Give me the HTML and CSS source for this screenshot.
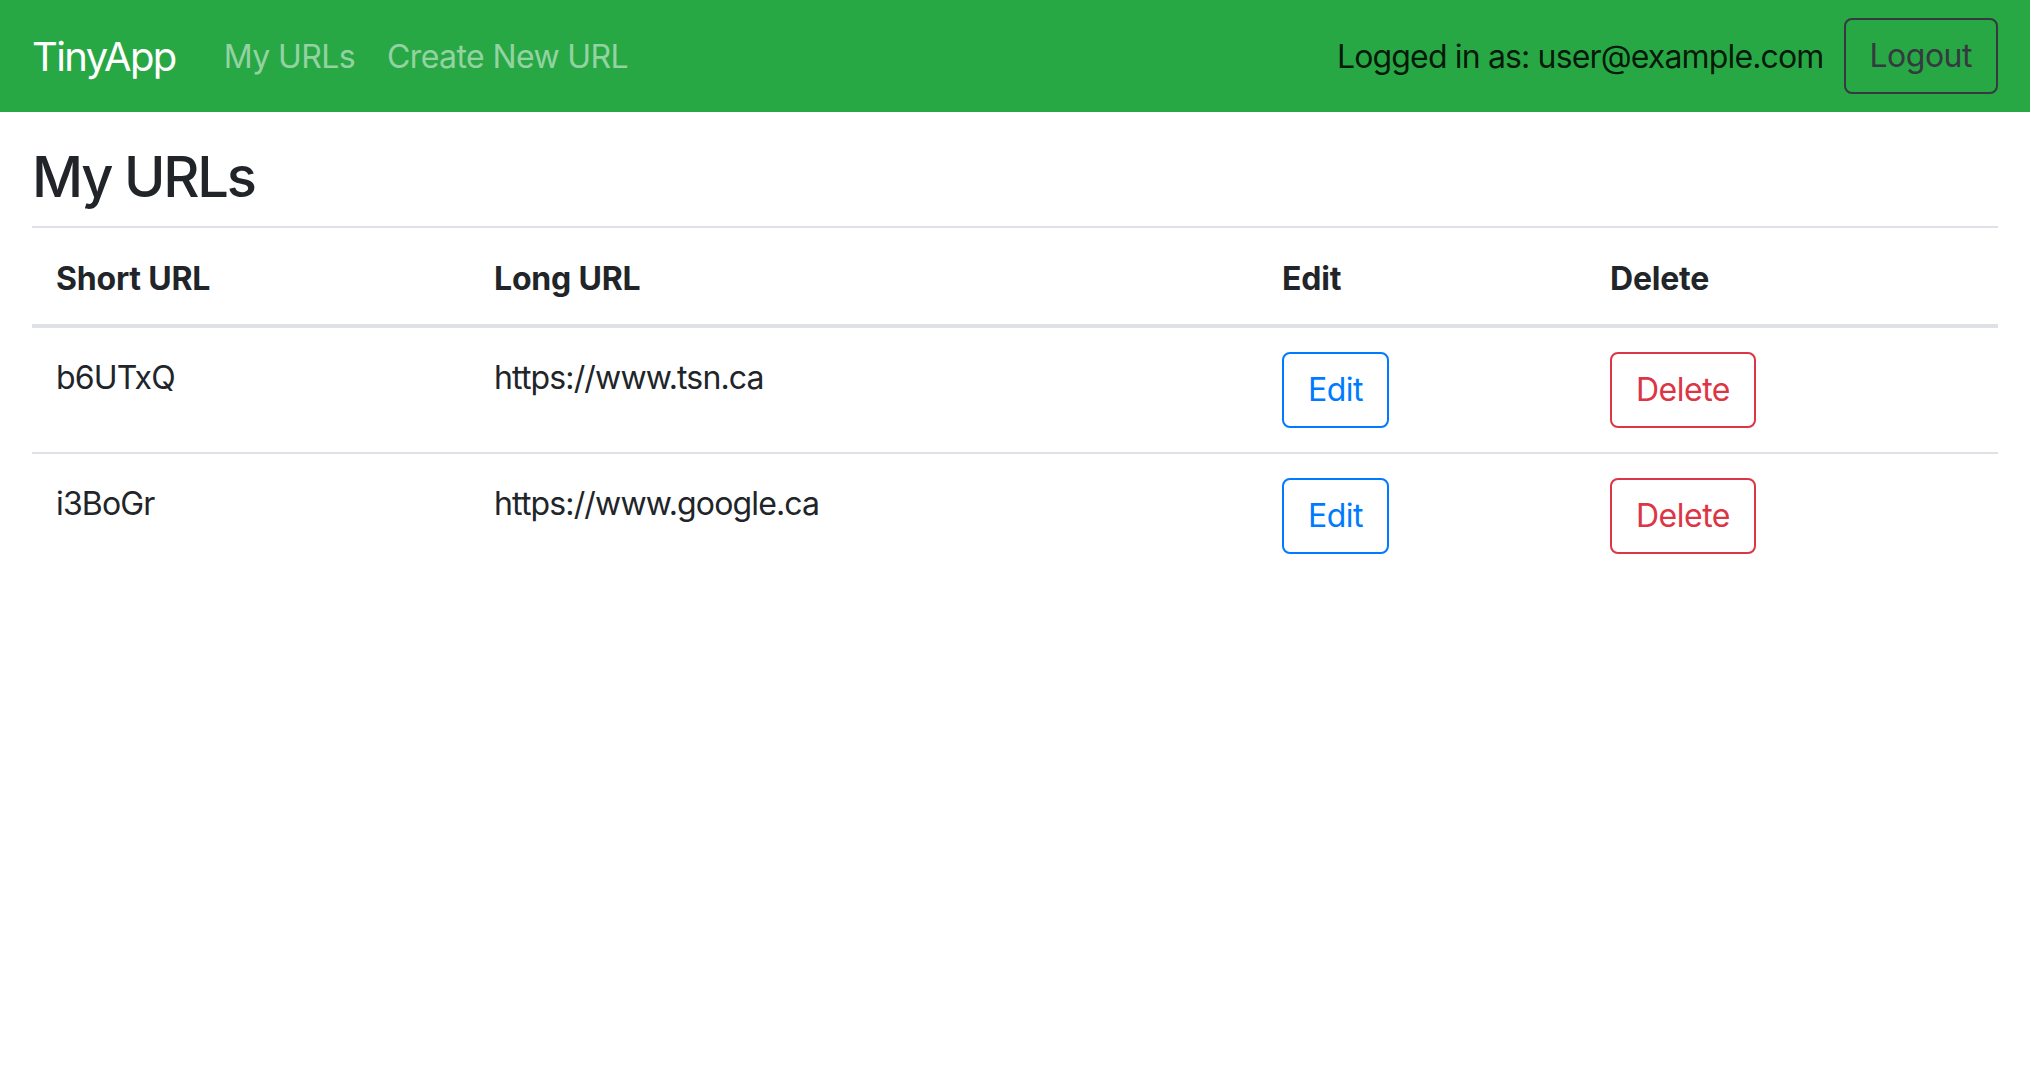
FILE: index.html
```html
<!DOCTYPE html>
<html lang="en">
<head>
<meta charset="utf-8">
<title>TinyApp</title>
<link rel="stylesheet" href="styles.css">
</head>
<body>
<nav class="navbar">
  <a class="brand" href="#">TinyApp</a>
  <ul class="nav-links">
    <li><a class="nav-link" href="#">My URLs</a></li>
    <li><a class="nav-link" href="#">Create New URL</a></li>
  </ul>
  <div class="nav-user">
    <span class="user-text">Logged in as: user@example.com</span>
    <button class="btn btn-dark">Logout</button>
  </div>
</nav>
<main class="content">
  <h3 class="page-title">My URLs</h3>
  <table class="table">
    <thead>
      <tr>
        <th class="col-short">Short URL</th>
        <th class="col-long">Long URL</th>
        <th class="col-edit">Edit</th>
        <th class="col-delete">Delete</th>
      </tr>
    </thead>
    <tbody>
      <tr>
        <td class="cell-text">b6UTxQ</td>
        <td class="cell-text">https://www.tsn.ca</td>
        <td><button class="btn btn-primary">Edit</button></td>
        <td><button class="btn btn-danger">Delete</button></td>
      </tr>
      <tr>
        <td class="cell-text">i3BoGr</td>
        <td class="cell-text">https://www.google.ca</td>
        <td><button class="btn btn-primary">Edit</button></td>
        <td><button class="btn btn-danger">Delete</button></td>
      </tr>
    </tbody>
  </table>
</main>
</body>
</html>
```

FILE: styles.css
```css
* { box-sizing: border-box; }
html, body { margin: 0; padding: 0; }
body {
  font-family: Inter, "Noto Sans", "Liberation Sans", sans-serif;
  font-size: 32px;
  line-height: 1.5;
  color: #212529;
  background: #fff;
  letter-spacing: -0.85px;
}
.navbar {
  display: flex;
  align-items: center;
  height: 112px;
  padding: 16px 32px;
  background: #28a745;
}
.brand {
  font-size: 40px;
  line-height: 60px;
  padding: 11px 0 9px;
  margin-right: 32px;
  color: #fff;
  text-decoration: none;
  letter-spacing: -1.6px;
}
.nav-links {
  display: flex;
  list-style: none;
  margin: 0;
  padding: 0;
}
.nav-link {
  display: block;
  padding: 17px 16px 15px;
  color: rgba(255,255,255,0.5);
  text-decoration: none;
  letter-spacing: -0.6px;
}
.nav-user {
  margin-left: auto;
  display: flex;
  align-items: center;
  gap: 20px;
}
.user-text { color: rgba(0,0,0,0.85); padding-top: 2px; }
.btn {
  font-family: inherit;
  font-size: 32px;
  line-height: 48px;
  padding: 12px 24px;
  border: 2px solid;
  border-radius: 8px;
  background: transparent;
  letter-spacing: -0.5px;
}
.btn-dark { color: #343a40; border-color: #343a40; }
.btn-primary { color: #007bff; border-color: #007bff; }
.btn-danger { color: #dc3545; border-color: #dc3545; }
.content { padding: 0 32px; }
.page-title {
  font-size: 56px;
  font-weight: 500;
  line-height: 1.2;
  margin: 32px 0 15px;
  letter-spacing: -2.2px;
}
.table {
  width: 100%;
  border-collapse: collapse;
}
.table th, .table td {
  padding: 24px;
  border-top: 2px solid #dee2e6;
  text-align: left;
  vertical-align: top;
}
.table td.cell-text { padding-top: 26px; padding-bottom: 22px; }
.table thead th {
  padding-top: 27px;
  padding-bottom: 21px;
  border-bottom: 4px solid #dee2e6;
  font-weight: 700;
  letter-spacing: -0.2px;
}
.col-short { width: 438px; }
.col-long { width: 788px; }
.col-edit { width: 328px; }
.col-delete { width: 412px; }
```
